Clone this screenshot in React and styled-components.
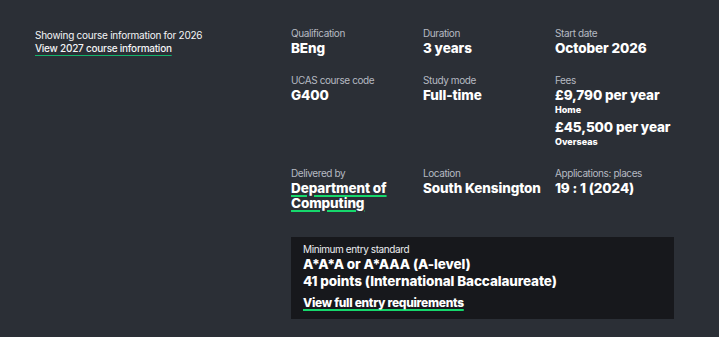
import React from "react";
import styled, { createGlobalStyle } from "styled-components";

const Global = createGlobalStyle`
  html, body { margin: 0; padding: 0; background: #2b2f36; }
  body { font-family: Inter, "Noto Sans", sans-serif; color: #fff; }
`;

const Page = styled.div`
  width: 719px;
  height: 337px;
  box-sizing: border-box;
  padding: 27px 0 0 35px;
  display: flex;
  background: #2b2f36;
`;

const Side = styled.div`
  width: 256px;
  padding-top: 2px;
  font-size: 10px;
  line-height: 13px;
  letter-spacing: -0.25px;
  color: #f4f5f7;
`;

const SideLink = styled.a`
  color: #f4f5f7;
  font-weight: 500;
  text-decoration: underline;
  text-decoration-color: #14b46c;
  text-decoration-thickness: 1px;
  text-underline-offset: 2.5px;
`;

const Main = styled.div`
  width: 383px;
  display: flex;
  flex-direction: column;
`;

const Grid = styled.div`
  display: grid;
  grid-template-columns: 132px 132px 119px;
  row-gap: 18px;
`;

const Cell = styled.div`
  display: flex;
  flex-direction: column;
`;

const Label = styled.div`
  font-size: 10px;
  line-height: 13px;
  letter-spacing: -0.4px;
  color: #b6bac2;
  margin-bottom: 1px;
`;

const Value = styled.div`
  font-size: 13.5px;
  line-height: 15px;
  font-weight: 800;
  letter-spacing: -0.1px;
  color: #fff;
  margin-top: ${(p) => (p.$after ? "3px" : "0")};
`;

const Sub = styled.div`
  font-size: 9px;
  line-height: 14px;
  font-weight: 800;
  color: #fff;
`;

const ValueLink = styled.a`
  color: #fff;
  text-decoration: underline;
  text-decoration-color: #16d86c;
  text-decoration-thickness: 2px;
  text-underline-offset: 2px;
`;

const Box = styled.div`
  margin-top: 26px;
  background: #17181c;
  padding: 6px 12px 0 12px;
  height: 82px;
  box-sizing: border-box;
`;

const BoxLabel = styled.div`
  font-size: 10px;
  line-height: 13px;
  letter-spacing: -0.4px;
  color: #eceef1;
`;

const BoxValue = styled.div`
  font-size: 13.5px;
  line-height: 17px;
  font-weight: 800;
  letter-spacing: -0.1px;
`;

const BoxLink = styled.a`
  display: inline-block;
  margin-top: 5px;
  font-size: 12px;
  line-height: 15px;
  font-weight: 800;
  letter-spacing: -0.3px;
  color: #fff;
  text-decoration: underline;
  text-decoration-color: #16d86c;
  text-decoration-thickness: 2px;
  text-underline-offset: 2px;
`;

const items = [
  { label: "Qualification", value: "BEng" },
  { label: "Duration", value: "3 years" },
  { label: "Start date", value: "October 2026" },
  { label: "UCAS course code", value: "G400" },
  { label: "Study mode", value: "Full-time" },
  {
    label: "Fees",
    fees: [
      ["£9,790 per year", "Home"],
      ["£45,500 per year", "Overseas"],
    ],
  },
  { label: "Delivered by", link: true },
  { label: "Location", value: "South Kensington" },
  { label: "Applications: places", value: "19 : 1 (2024)" },
];

export default function App() {
  return (
    <>
      <Global />
      <Page>
        <Side>
          <div>Showing course information for 2026</div>
          <SideLink href="#">View 2027 course information</SideLink>
        </Side>
        <Main>
          <Grid>
            {items.map((it) => (
              <Cell key={it.label}>
                <Label>{it.label}</Label>
                {it.value && <Value>{it.value}</Value>}
                {it.link && (
                  <Value>
                    <ValueLink href="#">
                      Department of
                      <br />
                      Computing
                    </ValueLink>
                  </Value>
                )}
                {it.fees &&
                  it.fees.map(([v, s], i) => (
                    <React.Fragment key={s}>
                      <Value $after={i > 0}>{v}</Value>
                      <Sub>{s}</Sub>
                    </React.Fragment>
                  ))}
              </Cell>
            ))}
          </Grid>
          <Box>
            <BoxLabel>Minimum entry standard</BoxLabel>
            <BoxValue>A*A*A or A*AAA (A-level)</BoxValue>
            <BoxValue>41 points (International Baccalaureate)</BoxValue>
            <BoxLink href="#">View full entry requirements</BoxLink>
          </Box>
        </Main>
      </Page>
    </>
  );
}
